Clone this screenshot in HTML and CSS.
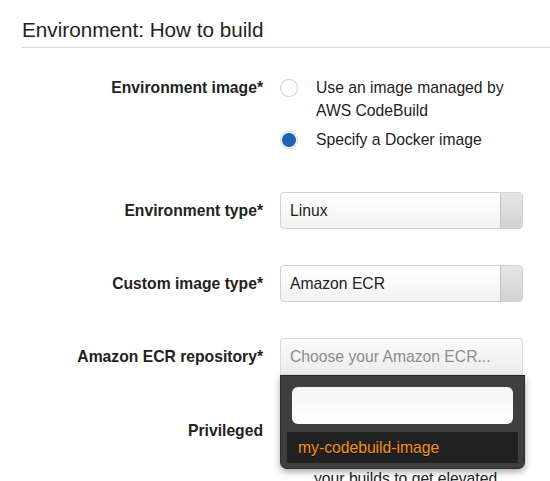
FILE: index.html
```html
<!DOCTYPE html>
<html>
<head>
<meta charset="utf-8">
<link rel="stylesheet" href="styles.css">
</head>
<body>
<div class="page">
  <h2 class="section-title">Environment: How to build</h2>
  <div class="form">
    <div class="row row-radio">
      <div class="label">Environment image*</div>
      <div class="control">
        <div class="radio-option">
          <span class="radio"></span>
          <span class="radio-text">Use an image managed by AWS CodeBuild</span>
        </div>
        <div class="radio-option">
          <span class="radio checked"></span>
          <span class="radio-text">Specify a Docker image</span>
        </div>
      </div>
    </div>
    <div class="row">
      <div class="label label-select">Environment type*</div>
      <div class="control">
        <div class="select"><span class="select-value">Linux</span><span class="select-btn"></span></div>
      </div>
    </div>
    <div class="row">
      <div class="label label-select">Custom image type*</div>
      <div class="control">
        <div class="select"><span class="select-value">Amazon ECR</span><span class="select-btn"></span></div>
      </div>
    </div>
    <div class="row">
      <div class="label label-select">Amazon ECR repository*</div>
      <div class="control">
        <div class="select open">
          <span class="select-value placeholder">Choose your Amazon ECR...</span>
          <div class="dropdown">
            <div class="search"></div>
            <div class="option active">my-codebuild-image</div>
          </div>
        </div>
      </div>
    </div>
    <div class="row row-priv">
      <div class="label">Privileged</div>
      <div class="control check-control">
        <span class="checkbox"></span>
        <span class="check-text">Enable this flag if you want<br>to build Docker images or<br>your builds to get elevated<br>privileges.</span>
      </div>
    </div>
  </div>
</div>
</body>
</html>
```
FILE: styles.css
```css
html, body {
  margin: 0;
  padding: 0;
  background: #fff;
}
.page {
  font-family: "Liberation Sans", Arial, sans-serif;
  color: #222;
  padding-left: 22px;
  height: 481px;
  overflow: hidden;
}
.section-title {
  margin: 0;
  padding: 18px 0 5px 0;
  font-size: 20.7px;
  line-height: 24px;
  font-weight: normal;
  color: #222;
  border-bottom: 1px solid #dcdcdc;
}
.form {
  padding-top: 28px;
}
.row {
  display: grid;
  grid-template-columns: 241px 243px;
  column-gap: 17px;
  margin-bottom: 36px;
}
.label {
  text-align: right;
  font-weight: bold;
  font-size: 15.7px;
  line-height: 23px;
  color: #222;
}
.label-select {
  line-height: 37px;
}
.row-radio {
  margin-bottom: 41px;
}
.radio-option {
  display: flex;
  align-items: flex-start;
  gap: 18px;
  margin-bottom: 6px;
}
.radio-option:last-child {
  margin-bottom: 0;
}
.radio {
  flex: none;
  width: 16px;
  height: 16px;
  border: 1px solid #cfcfcf;
  border-radius: 50%;
  margin-top: 3px;
  background: #fff;
}
.radio.checked {
  background: radial-gradient(circle, #1f63b5 0, #1f63b5 6.5px, #ffffff 7.5px);
  border-color: #d6d6d6;
}
.radio-text {
  font-size: 15.7px;
  line-height: 23px;
  width: 205px;
}
.select {
  position: relative;
  display: flex;
  height: 35px;
  border: 1px solid #d0d0d0;
  border-radius: 4px;
  background: linear-gradient(#ffffff, #f2f2f2);
}
.select-value {
  flex: 1;
  padding-left: 9px;
  font-size: 15.7px;
  line-height: 35px;
  color: #222;
}
.select-btn {
  width: 21px;
  border-left: 1px solid #c4c4c4;
  background: linear-gradient(#e6e6e6, #d2d2d2);
  border-radius: 0 4px 4px 0;
}
.select.open {
  border-radius: 4px 4px 0 0;
  border-color: #dadada;
  border-bottom: none;
  height: 36px;
  background: linear-gradient(#fbfbfb, #ececec);
}
.select-value.placeholder {
  color: #8c8c8c;
  line-height: 36px;
}
.dropdown {
  position: absolute;
  top: 36px;
  left: -1px;
  width: 231px;
  padding: 11px 6px 5px 6px;
  background: #3f3f3f;
  border: 1px solid #2e2e2e;
  border-top: 1px solid #262626;
  border-radius: 0 0 7px 7px;
  box-shadow: 0 3px 7px rgba(0, 0, 0, 0.35);
  z-index: 5;
}
.search {
  height: 37px;
  margin: 0 5px 8px 5px;
  background: linear-gradient(#f5f5f5, #ffffff);
  border-radius: 6px;
}
.option {
  height: 31px;
  line-height: 31px;
  padding-left: 11px;
  font-size: 15.7px;
  background: #212121;
  color: #f5921c;
  text-shadow: 0 1px 0 rgba(0, 0, 0, 0.6);
}
.row-priv {
  margin-top: 44px;
}
.row-priv .label {
  line-height: 24px;
}
.check-control {
  display: flex;
  gap: 18px;
}
.checkbox {
  flex: none;
  width: 14px;
  height: 14px;
  margin-top: 4px;
  border: 1px solid #bbb;
  border-radius: 3px;
}
.check-text {
  font-size: 15.7px;
  line-height: 24px;
  width: 205px;
  white-space: nowrap;
}
```
